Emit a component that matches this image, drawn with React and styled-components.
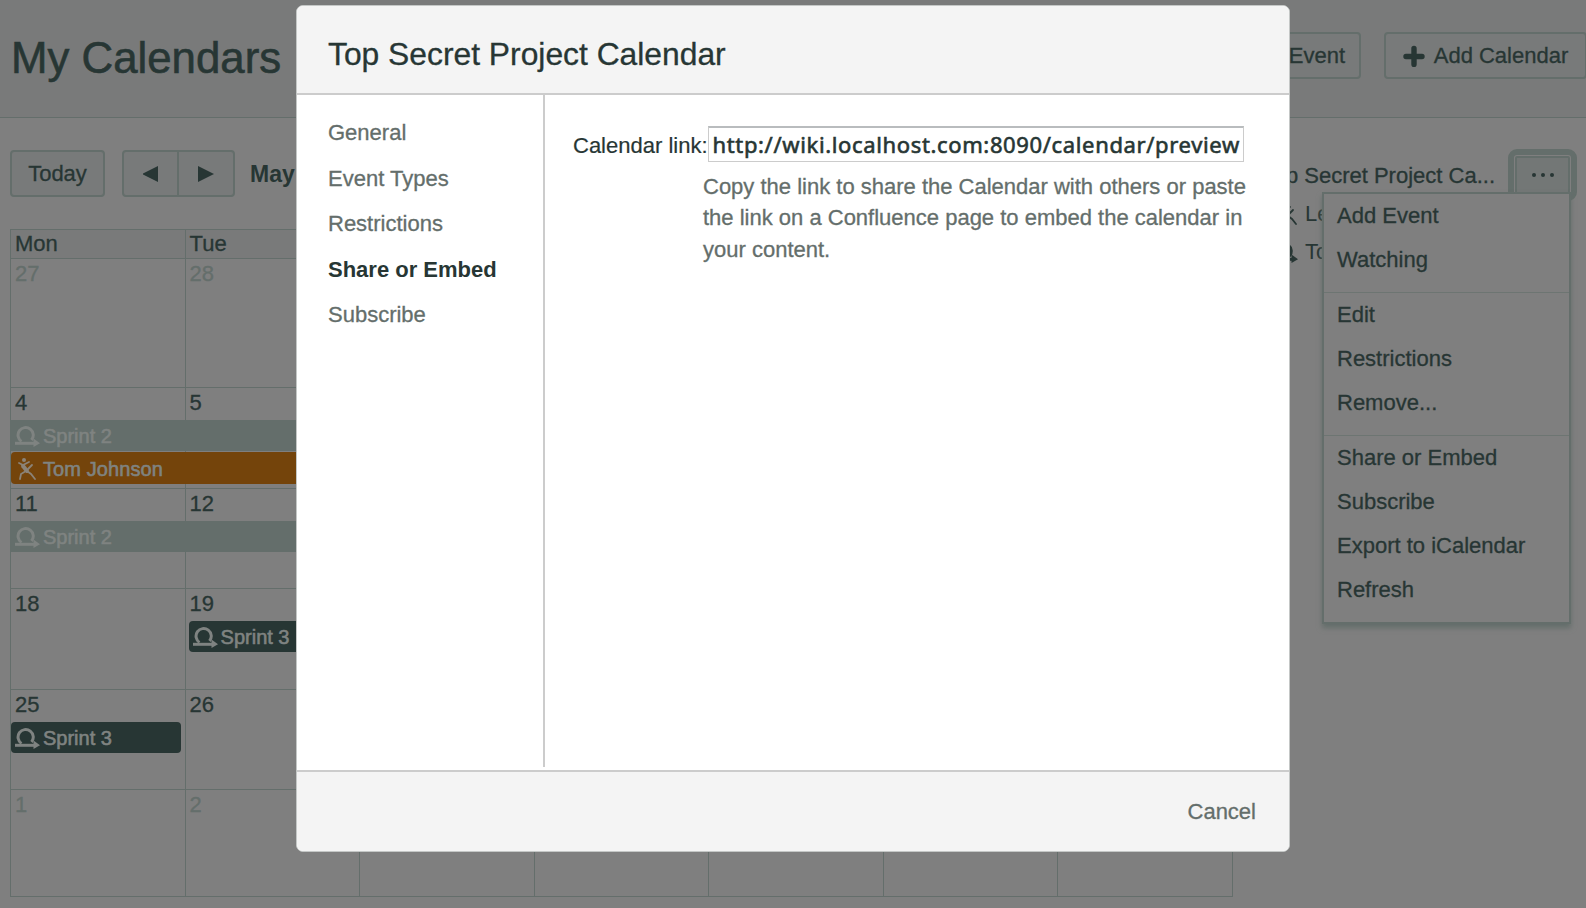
import React from "react";
import styled, { createGlobalStyle } from "styled-components";

const GlobalStyle = createGlobalStyle`
  * { box-sizing: border-box; }
  html, body { margin: 0; padding: 0; }
  body {
    width: 1586px;
    height: 908px;
    overflow: hidden;
    background: #7f7f7f;
    color: #273634;
    font: 22px/30px "Liberation Sans", Arial, sans-serif;
  }
`;

const line = "#646e6b";

const Page = styled.div`
  position: relative;
  width: 1586px;
  height: 908px;
  overflow: hidden;
`;

const PageHeader = styled.header`
  display: flex;
  align-items: flex-start;
  justify-content: space-between;
  height: 118px;
  padding: 32px 0 0 11px;
  background: #797a7a;
  border-bottom: 1px solid ${line};
`;

const PageTitle = styled.h1`
  margin: 0;
  font-size: 43.8px;
  line-height: 52px;
  font-weight: 400;
  -webkit-text-stroke: 0.6px #273634;
`;

const HeaderActions = styled.div`
  display: flex;
  gap: 23px;
  margin-right: -1px;
`;

const Button = styled.button`
  display: flex;
  align-items: center;
  justify-content: ${(p) => p.$justify || "center"};
  gap: 9px;
  width: ${(p) => p.$width}px;
  height: 47px;
  padding: 0 ${(p) => p.$pad || 0}px;
  border: 2px solid ${line};
  border-radius: ${(p) => p.$radius || "4px"};
  background: #787a7a;
  color: #273634;
  font: inherit;
  -webkit-text-stroke: 0.3px #273634;
  white-space: nowrap;
`;

const Content = styled.main`
  display: flex;
  justify-content: space-between;
  padding: 32px 7px 0 10px;
`;

const CalendarPane = styled.section`
  width: 1223px;
`;

const Toolbar = styled.div`
  display: flex;
  align-items: center;
  height: 47px;
`;

const Pager = styled.div`
  display: flex;
  margin: 0 15px 0 17px;

  button + button { margin-left: -2px; }
`;

const Month = styled.strong`
  padding-top: 1px;
  font-size: 23px;
`;

const Calendar = styled.div`
  display: flex;
  flex-direction: column;
  margin-top: 32px;
  border: solid ${line};
  border-width: 1px 0 1px 1px;
`;

const Columns = styled.div`
  display: grid;
  grid-template-columns: repeat(7, minmax(0, 1fr));
`;

const DayNames = styled(Columns)`
  height: 28px;
  background: #797a7a;
  line-height: 28px;
  -webkit-text-stroke: 0.3px #273634;
`;

const DayName = styled.div`
  padding-left: 4px;
  border-right: 1px solid ${line};
`;

const Week = styled(Columns)`
  height: ${(p) => p.$height}px;
  grid-template-rows: 32px 32px 32px;
  border-top: 1px solid ${line};
`;

const Day = styled.div`
  grid-row: 1 / 5;
  grid-column: ${(p) => p.$col};
  padding: 0 0 0 4px;
  border-right: 1px solid ${line};
  color: ${(p) => (p.$muted ? line : "#273634")};
  -webkit-text-stroke: 0.3px currentColor;
`;

const eventTones = {
  faded: "#646e6b",
  leave: "#74440b",
  sprint: "#273634",
};

const Event = styled.div`
  display: flex;
  align-items: center;
  grid-row: ${(p) => p.$row || 2};
  grid-column: ${(p) => p.$cols};
  height: ${(p) => (p.$tone === "leave" ? 32 : 31)}px;
  margin: ${(p) => p.$margin || "0"};
  padding: 1px 0 0 4px;
  gap: 3px;
  border-radius: ${(p) => (p.$tone === "faded" ? 0 : 4)}px;
  background: ${(p) => eventTones[p.$tone]};
  color: #7f8381;
  font-size: 20px;
  letter-spacing: ${(p) => (p.$tone === "leave" ? 0.1 : 0)}px;
  -webkit-text-stroke: 0.6px #7f8381;
  white-space: nowrap;
`;

const Glyph = styled.svg`
  display: block;
  flex: none;
`;

const SourcePane = styled.aside`
  position: relative;
  width: 320px;
`;

const SourceRow = styled.div`
  display: flex;
  align-items: center;
  justify-content: flex-end;
  height: 47px;
  -webkit-text-stroke: 0.3px #273634;
`;

const SourceName = styled.span`
  padding-top: 4px;
  white-space: nowrap;
`;

const MoreButton = styled.button`
  display: flex;
  align-items: center;
  justify-content: center;
  gap: 5px;
  flex: none;
  width: 55px;
  height: 38px;
  margin: 3px 9px 0 20px;
  padding: 0;
  border: 2px solid ${line};
  border-radius: 2px;
  outline: 6px solid ${line};
  outline-offset: 1px;
  background: #737776;
`;

const Dot = styled.span`
  width: 4px;
  height: 4px;
  border-radius: 2px;
  background: #273634;
`;

const SourceChild = styled.div`
  display: flex;
  align-items: center;
  gap: ${(p) => p.$gap}px;
  height: 38px;
  margin-top: ${(p) => p.$lift || 0}px;
  padding-left: ${(p) => 21 - p.$gap}px;
`;

const Menu = styled.ul`
  position: absolute;
  top: 42px;
  right: 8px;
  width: 249px;
  margin: 0;
  padding: 0;
  list-style: none;
  border: 2px solid ${line};
  background: #7f7f7f;
  box-shadow: 0 4px 5px ${line};
`;

const MenuItem = styled.li`
  height: 44px;
  padding-left: 13px;
  line-height: 44px;
  -webkit-text-stroke: 0.3px #273634;
`;

const MenuGroup = styled.li`
  padding-bottom: 10px;

  & + & { border-top: 1px solid #6d7572; }
  ul { margin: 0; padding: 0; list-style: none; }
`;

const Dialog = styled.div`
  position: absolute;
  left: 296px;
  top: 5px;
  display: flex;
  flex-direction: column;
  width: 994px;
  height: 847px;
  border: 1px solid #c4c7c6;
  border-radius: 7px;
  overflow: hidden;
  background: #fff;
`;

const DialogHeader = styled.header`
  height: 89px;
  padding: 28px 0 0 31px;
  border-bottom: 2px solid #ccc;
  background: #f4f4f4;
`;

const DialogTitle = styled.h2`
  margin: 0;
  font-size: 31.8px;
  line-height: 40px;
  font-weight: 400;
  -webkit-text-stroke: 0.3px #273634;
`;

const DialogBody = styled.div`
  display: flex;
  flex: 1;
`;

const Tabs = styled.nav`
  display: flex;
  flex-direction: column;
  width: 248px;
  height: 672px;
  padding: 15px 0 0 31px;
  border-right: 2px solid #ccc;
`;

const Tab = styled.span`
  height: 45.5px;
  line-height: 45px;
  color: ${(p) => (p.$active ? "#273634" : "#646e6b")};
  font-weight: ${(p) => (p.$active ? 700 : 400)};
  -webkit-text-stroke: ${(p) => (p.$active ? 0 : 0.3)}px #646e6b;
`;

const Form = styled.div`
  padding: 31px 0 0 28px;
`;

const Field = styled.label`
  display: flex;
  align-items: center;
  height: 36px;
  white-space: nowrap;
  -webkit-text-stroke: 0.2px #273634;
`;

const FieldName = styled.span`
  padding-top: 3px;
`;

const LinkBox = styled.span`
  width: 536px;
  height: 36px;
  padding: 0 3px 0 4px;
  border: 1px solid #ccc;
  border-top: 2px solid #b9bcbe;
`;

const LinkText = styled.span`
  display: block;
  font: 22px/33px "Noto Sans", sans-serif;
  letter-spacing: 0.64px;
  -webkit-text-stroke: 0.6px #273634;
`;

const Help = styled.p`
  width: 560px;
  margin: 8.5px 0 0 130px;
  color: #646e6b;
  line-height: 31.5px;
  -webkit-text-stroke: 0.3px #646e6b;
`;

const DialogFooter = styled.footer`
  display: flex;
  justify-content: flex-end;
  height: 81px;
  padding: 25px 33px 0 0;
  border-top: 2px solid #ccc;
  background: #f4f4f4;
  color: #646e6b;
  -webkit-text-stroke: 0.3px #646e6b;
`;

function SprintGlyph({ color = "#7f8381" }) {
  return (
    <Glyph width="25" height="21" viewBox="0 0 25 21" fill="none" stroke={color} strokeWidth="3">
      <path d="M6.5 15.5A7.6 7.6 0 1 1 16.5 14" />
      <path d="M0 17.3H20" />
      <path d="M18.5 12.5L25 17.3L18.5 21Z" fill={color} stroke="none" />
    </Glyph>
  );
}

function TravelGlyph({ color = "#8b8378" }) {
  return (
    <Glyph width="25" height="24" viewBox="0 0 25 24" fill="none" stroke={color} strokeWidth="1.8" strokeLinecap="round">
      <circle cx="9" cy="3" r="2" fill={color} stroke="none" />
      <path d="M4 6L8 8L14 5M8 8L11 14M13 12L17 8M11 14L6 17L5 22M12 14L16 17L20 22" />
      <path d="M8 9L12 14" strokeWidth="4" />
    </Glyph>
  );
}

function PlusGlyph() {
  return (
    <Glyph width="22" height="22" viewBox="0 0 22 22" stroke="#273634" strokeWidth="5.4" strokeLinecap="round">
      <path d="M11 3.5V19.5M3 11.5H19" />
    </Glyph>
  );
}

function Arrow({ left }) {
  return (
    <Glyph width="16" height="16" viewBox="0 0 16 16" fill="#273634">
      <path d={left ? "M15 0V16L-1 8Z" : "M0 0V16L16 8Z"} />
    </Glyph>
  );
}

const weeks = [
  { height: 129, days: [27, 28], muted: true },
  { height: 101, days: [4, 5], events: [
    { label: "Sprint 2", tone: "faded", cols: "1 / 4" },
    { label: "Tom Johnson", tone: "leave", cols: "1 / 4", row: 3, icon: "travel" },
  ] },
  { height: 100, days: [11, 12], events: [{ label: "Sprint 2", tone: "faded", cols: "1 / 4" }] },
  { height: 101, days: [18, 19], events: [{ label: "Sprint 3", tone: "sprint", cols: "2 / 5", margin: "0 0 0 3px" }] },
  { height: 100, days: [25, 26], events: [{ label: "Sprint 3", tone: "sprint", cols: "1 / 2", margin: "0 5px 0 0" }] },
  { height: 107, days: [1, 2], muted: true },
];

const menuGroups = [
  ["Add Event", "Watching"],
  ["Edit", "Restrictions", "Remove..."],
  ["Share or Embed", "Subscribe", "Export to iCalendar", "Refresh"],
];

const tabs = ["General", "Event Types", "Restrictions", "Share or Embed", "Subscribe"];

export default function App() {
  return (
    <Page>
      <GlobalStyle />
      <PageHeader>
        <PageTitle>My Calendars</PageTitle>
        <HeaderActions>
          <Button $width={160} $pad={14} $justify="flex-end">Event</Button>
          <Button $width={203} $pad={15}><PlusGlyph />Add Calendar</Button>
        </HeaderActions>
      </PageHeader>

      <Content>
        <CalendarPane>
          <Toolbar>
            <Button $width={95}>Today</Button>
            <Pager>
              <Button $width={57} $radius="4px 0 0 4px" aria-label="Previous"><Arrow left /></Button>
              <Button $width={58} $radius="0 4px 4px 0" aria-label="Next"><Arrow /></Button>
            </Pager>
            <Month>May</Month>
          </Toolbar>
          <Calendar>
            <DayNames>
              {["Mon", "Tue", "", "", "", "", ""].map((name, i) => <DayName key={i}>{name}</DayName>)}
            </DayNames>
            {weeks.map((week, w) => (
              <Week key={w} $height={week.height}>
                {[0, 1, 2, 3, 4, 5, 6].map((d) => (
                  <Day key={d} $col={d + 1} $muted={week.muted}>{week.days[d]}</Day>
                ))}
                {(week.events || []).map((e) => (
                  <Event key={e.label} $tone={e.tone} $cols={e.cols} $row={e.row} $margin={e.margin}>
                    {e.icon === "travel" ? <TravelGlyph /> : <SprintGlyph />}
                    {e.label}
                  </Event>
                ))}
              </Week>
            ))}
          </Calendar>
        </CalendarPane>

        <SourcePane>
          <SourceRow>
            <SourceName>p Secret Project Ca...</SourceName>
            <MoreButton aria-label="More"><Dot /><Dot /><Dot /></MoreButton>
          </SourceRow>
          <SourceChild $lift={-2} $gap={4}><TravelGlyph color="#273634" />Le</SourceChild>
          <SourceChild $gap={7}><SprintGlyph color="#273634" />To</SourceChild>
          <Menu>
            {menuGroups.map((group) => (
              <MenuGroup key={group[0]}>
                <ul>{group.map((item) => <MenuItem key={item}>{item}</MenuItem>)}</ul>
              </MenuGroup>
            ))}
          </Menu>
        </SourcePane>
      </Content>

      <Dialog role="dialog">
        <DialogHeader><DialogTitle>Top Secret Project Calendar</DialogTitle></DialogHeader>
        <DialogBody>
          <Tabs>
            {tabs.map((tab) => <Tab key={tab} $active={tab === "Share or Embed"}>{tab}</Tab>)}
          </Tabs>
          <Form>
            <Field>
              <FieldName>Calendar link:</FieldName>
              <LinkBox><LinkText>http://wiki.localhost.com:8090/calendar/preview</LinkText></LinkBox>
            </Field>
            <Help>
              Copy the link to share the Calendar with others or paste<br />
              the link on a Confluence page to embed the calendar in<br />
              your content.
            </Help>
          </Form>
        </DialogBody>
        <DialogFooter>Cancel</DialogFooter>
      </Dialog>
    </Page>
  );
}
